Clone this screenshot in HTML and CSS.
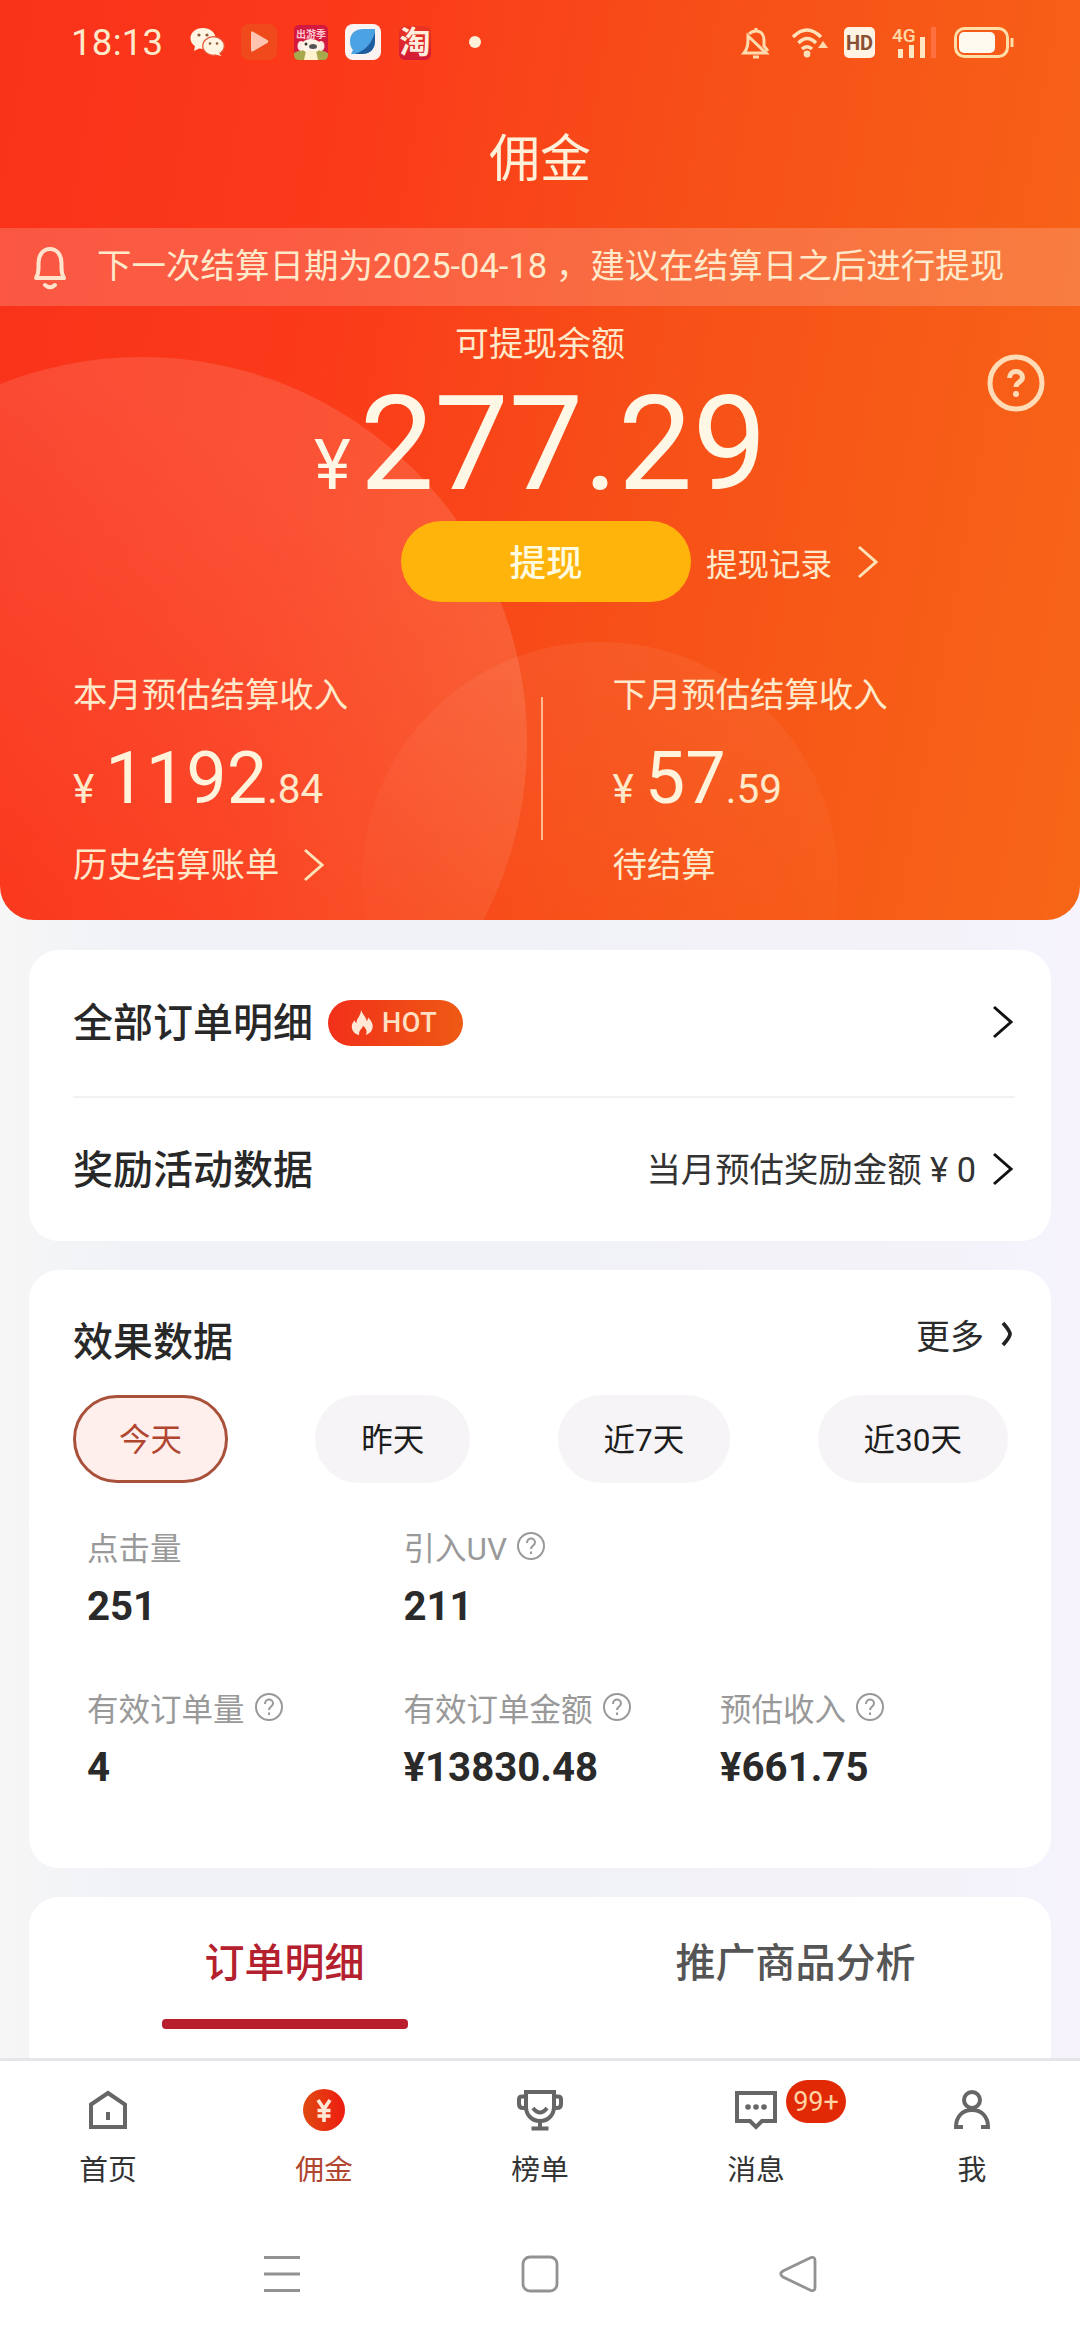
FILE: index.html
```
<!DOCTYPE html>
<html lang="zh-CN">
<head>
<meta charset="utf-8">
<title>佣金</title>
<link rel="stylesheet" href="styles.css">
</head>
<body>
<div class="screen">
  <header class="hero">
    <svg class="hero-circles" width="1080" height="920" viewBox="0 0 1080 920">
      <defs>
        <linearGradient id="c1" gradientUnits="userSpaceOnUse" x1="60" y1="930" x2="330" y2="520"><stop offset="0" stop-color="#fff" stop-opacity=".02"/><stop offset="1" stop-color="#fff" stop-opacity=".12"/></linearGradient>
        <linearGradient id="c2" gradientUnits="userSpaceOnUse" x1="600" y1="642" x2="600" y2="920"><stop offset="0" stop-color="#fff" stop-opacity=".06"/><stop offset="1" stop-color="#fff" stop-opacity=".01"/></linearGradient>
      </defs>
      <circle cx="142" cy="742" r="385" fill="url(#c1)"/>
      <circle cx="600" cy="880" r="238" fill="url(#c2)"/>
    </svg>

    <div class="status">
      <span class="time">18:13</span>
      <div class="apps">
        <svg width="36" height="36" viewBox="0 0 36 36"><path d="M14 4C6.500 4 1.500 8.500 1.500 14.200c0 3.300 1.700 6 4.500 8L5 27l5-2.600c1.300.3 2.600.5 4 .5C21 24.900 26.500 20 26.500 14.200S21 4 14 4z" fill="#fff5e2"/><ellipse cx="24.500" cy="22" rx="10.800" ry="9.300" fill="#fff5e2" stroke="#e8563a" stroke-width="1.200"/><path d="M29 28l3.500 4-6-1.500z" fill="#fff5e2"/><g fill="#8c5a3c"><circle cx="10" cy="11" r="1.600"/><circle cx="18" cy="11" r="1.600"/><circle cx="21" cy="19.500" r="1.300"/><circle cx="28" cy="19.500" r="1.300"/></g></svg>
        <svg width="36" height="36" viewBox="0 0 36 36"><rect width="36" height="36" rx="8" fill="#f04a1c"/><path d="M10 9c0-1.500 1-2 2.300-1.200l14 8.300c1.300.8 1.300 2 0 2.800l-14 8.300C11 28 10 27.500 10 26z" fill="#ffc4b0"/></svg>
        <svg width="36" height="36" viewBox="0 0 36 36"><rect x="1" y="1" width="34" height="35" rx="5" fill="#d3193f"/><path d="M1 29q8-4 17-4t17 4v2q0 5-5 5H6q-5 0-5-5z" fill="#a6a94c"/><ellipse cx="8" cy="22" rx="3.500" ry="5" fill="#ffe9e2"/><ellipse cx="28" cy="22" rx="3.500" ry="5" fill="#ffe9e2"/><ellipse cx="18" cy="22" rx="10" ry="7" fill="#fff2e6"/><path d="M13 27h10l2 9H11z" fill="#fff3cf"/><circle cx="13" cy="20" r="1.500" fill="#333"/><ellipse cx="20" cy="22.500" rx="4" ry="2.500" fill="#555"/><text x="18" y="14" text-anchor="middle" class="app-tiny">出游季</text></svg>
        <svg width="36" height="36" viewBox="0 0 36 36"><rect width="36" height="36" rx="8" fill="#fbf3f2"/><path d="M5 17C5 9 11 5 18 5h12v12c0 9-6 13-13 13H6l2-4c-2-2-3-5-3-9z" fill="#4ba3e4"/><path d="M30 8v9c0 9-6 13-13 13h-7C22 26 27 18 30 8z" fill="#1f5c9d"/></svg>
        <svg width="36" height="36" viewBox="0 0 36 36"><defs><linearGradient id="tao" x1="0" y1="0" x2="0" y2="1"><stop offset="0" stop-color="#ea3522"/><stop offset="1" stop-color="#d21a38"/></linearGradient></defs><rect x="2" y="2" width="32" height="34" rx="6" fill="url(#tao)"/><text x="18" y="29" text-anchor="middle" class="app-tao">淘</text></svg>
        <i class="dot"></i>
      </div>
      <div class="indicators">
        <svg width="30" height="36" viewBox="0 0 30 36" fill="none" stroke="#ffdcae" stroke-width="3"><path d="M15 4v3M8 10c2-2 4-3 7-3 6 0 8 5 8 9v6l4 5"/><path d="M7 12l18 17H3c4-5 4-9 4-17z"/><path d="M12 33h6"/></svg>
        <svg width="36" height="36" viewBox="0 0 36 36" fill="none" stroke="#ffe2ba" stroke-width="3.500"><path d="M1 13Q15-1 29 13" /><path d="M6.500 19Q15 10 24 19"/><circle cx="15" cy="30" r="3.400" fill="#ffe2ba" stroke="none"/><path d="M10 25q5-4.500 10 0"/><path d="M26 24l5-7 5 7z" fill="#ffdcae" stroke="none"/></svg>
        <span class="hd">HD</span>
        <svg width="48" height="36" viewBox="0 0 48 36"><text x="1" y="18" class="net">4G</text><g fill="#ffe6c2"><rect x="7" y="25" width="5" height="9"/><rect x="18" y="21" width="5" height="13"/><rect x="29" y="13" width="5" height="21"/></g><rect x="40" y="3" width="5" height="31" fill="#ff7040"/></svg>
        <svg width="62" height="36" viewBox="0 0 62 36"><rect x="2.500" y="4.500" width="52" height="28" rx="9" fill="none" stroke="#ffdfa8" stroke-width="3"/><rect x="6" y="8" width="36" height="21" rx="5" fill="#fffaf0"/><path d="M59 14v9" stroke="#ffdfa8" stroke-width="3"/></svg>
      </div>
    </div>

    <h1 class="title">佣金</h1>

    <div class="notice">
      <svg width="38" height="48" viewBox="0 0 38 48" fill="none" stroke="#ffe3cd" stroke-width="4"><path d="M5 35c2-3 2.500-6 2.500-10v-5C7.500 12 12 6 19 6s11.500 6 11.500 14v5c0 4 .5 7 2.500 10z" stroke-linejoin="round"/><path d="M14 42q5 4.500 10 0" stroke-linecap="round"/></svg>
      <span>下一次结算日期为2025-04-18 ，建议在结算日之后进行提现</span>
    </div>

    <div class="balance">
      <div class="balance-label">可提现余额</div>
      <div class="amount"><span class="yen">¥</span>277.29</div>
      <svg class="help" width="60" height="60" viewBox="0 0 60 60" fill="none" stroke="#ffdcb6" stroke-width="5"><circle cx="30" cy="30" r="26"/><path d="M23.500 25c0-4 3-6.500 6.500-6.500s6.500 2.500 6.500 6c0 4.500-6.500 4.500-6.500 9.500"/><circle cx="30" cy="41" r="3" fill="#ffdcb6" stroke="none"/></svg>
      <div class="actions">
        <button class="withdraw">提现</button>
        <span class="records">提现记录</span>
        <svg width="24" height="36" viewBox="0 0 24 36" class="chev"><path d="M3 3l17 15L3 33"/></svg>
      </div>
    </div>

    <div class="income">
      <section class="income-col">
        <div class="income-label">本月预估结算收入</div>
        <div class="income-num"><span>¥</span><b>1192</b><span>.84</span></div>
        <div class="income-foot">历史结算账单<svg width="24" height="36" viewBox="0 0 24 36" class="chev"><path d="M3 3l17 15L3 33"/></svg></div>
      </section>
      <i class="income-line"></i>
      <section class="income-col">
        <div class="income-label">下月预估结算收入</div>
        <div class="income-num"><span>¥</span><b>57</b><span>.59</span></div>
        <div class="income-foot">待结算</div>
      </section>
    </div>
  </header>

  <main class="cards">
    <section class="card links">
      <div class="row">
        <h2>全部订单明细</h2>
        <span class="hot"><svg width="26" height="30" viewBox="0 0 26 30"><path d="M12 1c2 6 6 8 6 12 1-1 1.500-2 1.500-4C24 13 25 17 24.500 20c-.6 4-3.500 7-7.500 8 2-3 1-7-3-10-1 4-5 5-4 10-5-1-8.500-5-8-10 .3-3 1.500-4 3-6 .5 2 1 3 2 3C7 10 12 7 12 1z" fill="#ffe9d6"/></svg>HOT</span>
        <svg width="24" height="36" viewBox="0 0 24 36" class="chev dark"><path d="M3 3l17 15L3 33"/></svg>
      </div>
      <div class="row">
        <h2>奖励活动数据</h2>
        <span class="reward">当月预估奖励金额 ¥ 0</span>
        <svg width="24" height="36" viewBox="0 0 24 36" class="chev dark"><path d="M3 3l17 15L3 33"/></svg>
      </div>
    </section>

    <section class="card effect">
      <div class="effect-head">
        <h2>效果数据</h2>
        <span class="more">更多<svg width="14" height="26" viewBox="0 0 14 26" fill="none" stroke="#222" stroke-width="3.800"><path d="M3 2q7 8 7 11t-7 11"/></svg></span>
      </div>
      <div class="pills">
        <span class="pill active">今天</span><span class="pill">昨天</span><span class="pill">近7天</span><span class="pill">近30天</span>
      </div>
      <div class="stats">
        <div class="stat"><p>点击量</p><strong>251</strong></div>
        <div class="stat wide"><p>引入UV<svg class="q" viewBox="0 0 30 30"><circle cx="15" cy="15" r="13"/><path d="M11 12c0-3 2-4.500 4-4.500s4 1.500 4 4c0 3-4 3-4 6.500M15 20.500v2.500"/></svg></p><strong>211</strong></div>
        <div class="stat"><p>有效订单量<svg class="q" viewBox="0 0 30 30"><circle cx="15" cy="15" r="13"/><path d="M11 12c0-3 2-4.500 4-4.500s4 1.500 4 4c0 3-4 3-4 6.500M15 20.500v2.500"/></svg></p><strong>4</strong></div>
        <div class="stat"><p>有效订单金额<svg class="q" viewBox="0 0 30 30"><circle cx="15" cy="15" r="13"/><path d="M11 12c0-3 2-4.500 4-4.500s4 1.500 4 4c0 3-4 3-4 6.500M15 20.500v2.500"/></svg></p><strong>¥13830.48</strong></div>
        <div class="stat"><p>预估收入<svg class="q" viewBox="0 0 30 30"><circle cx="15" cy="15" r="13"/><path d="M11 12c0-3 2-4.500 4-4.500s4 1.500 4 4c0 3-4 3-4 6.500M15 20.500v2.500"/></svg></p><strong>¥661.75</strong></div>
      </div>
    </section>

    <section class="card tabs">
      <div class="tab current">订单明细</div>
      <div class="tab">推广商品分析</div>
    </section>
  </main>

  <nav class="tabbar">
    <a class="item"><svg class="ico" viewBox="0 0 48 48"><path d="M7 18.500L24 7l17 11.500V41H7z"/><path d="M24 26v8"/></svg>首页</a>
    <a class="item on"><svg class="ico" viewBox="0 0 48 48"><defs><linearGradient id="coin"><stop offset="0" stop-color="#e04a12"/><stop offset="1" stop-color="#ee1c10"/></linearGradient></defs><circle cx="24" cy="24" r="21" fill="url(#coin)" stroke="none"/><path d="M18 14l6 9 6-9M24 23v13M17.500 24.500h13M17.500 30h13" stroke="#ffe9d6" stroke-width="3.600"/></svg>佣金</a>
    <a class="item"><svg class="ico" viewBox="0 0 48 48"><path d="M10 6h28v15c0 8-6 14-14 14S10 29 10 21z"/><path d="M10 10.500H6q-3 0-3 3V18q0 4 4 4h3M38 10.500h4q3 0 3 3V18q0 4-4 4h-3M17 22q7 9 14 0M24 35v7M15.500 42.500h17"/></svg>榜单</a>
    <a class="item"><span class="msg"><svg class="ico" viewBox="0 0 48 48"><path d="M5 7h38v28H30l-6 6-6-6H5z"/><g fill="#666" stroke="none"><circle cx="16" cy="21" r="2.800"/><circle cx="24" cy="21" r="2.800"/><circle cx="32" cy="21" r="2.800"/></g></svg><em class="badge">99+</em></span>消息</a>
    <a class="item"><svg class="ico" viewBox="0 0 48 48"><circle cx="24" cy="14" r="8"/><path d="M15 41H8c0-10 6-17 16-17s16 7 16 17h-7"/></svg>我</a>
  </nav>

  <footer class="sysnav">
    <svg width="40" height="40" viewBox="0 0 40 40"><path d="M2 3.500h36M2 20h36M2 36.500h36"/></svg>
    <svg width="40" height="40" viewBox="0 0 40 40"><rect x="3" y="3" width="34" height="34" rx="7"/></svg>
    <svg width="40" height="40" viewBox="0 0 40 40"><path d="M33 3.500L5 17q-4.500 3 0 6l28 13.500q4 1 4-3v-27q0-4-4-3z"/></svg>
  </footer>
</div>
</body>
</html>
```
FILE: styles.css
```
* { box-sizing: border-box; margin: 0; padding: 0; }

body {
  width: 1080px;
  font-family: Roboto, "Noto Sans CJK SC", sans-serif;
  background: #fff;
  color: #2b2b2b;
}

svg { display: block; flex: none; }

.screen {
  display: flex;
  flex-direction: column;
  width: 1080px;
  height: 2340px;
  overflow: hidden;
  background: linear-gradient(90deg, #f6f6f6, #f0f2f7 12%, #f2f2f8 85%, #f6f3fd);
}

/* Red header */
.hero {
  position: relative;
  flex: none;
  height: 920px;
  overflow: hidden;
  border-radius: 0 0 34px 34px;
  background: linear-gradient(100deg, #f9321a 0%, #fb3a1a 30%, #f74f18 58%, #f76617 100%);
  color: #ffe9cb;
}
.hero-circles { position: absolute; left: 0; top: 0; }
.hero > div, .title { position: relative; }

.status {
  display: flex;
  align-items: center;
  height: 84px;
  padding-left: 71px;
}
.time { width: 118px; font-size: 36.500px; letter-spacing: .3px; }
.apps { display: flex; align-items: center; gap: 16px; }
.app-tiny { font-size: 10px; font-weight: 700; fill: #ffc7d0; }
.app-tao { font-size: 31px; font-weight: 700; fill: #ffeede; }
.dot { width: 12px; height: 12px; margin-left: 20px; border-radius: 50%; background: #fff0d9; }
.indicators { display: flex; align-items: center; margin-left: 260px; }
.indicators svg:nth-child(2) { margin: 0 16px 0 21px; }
.hd {
  width: 31px;
  height: 31px;
  margin-right: 16px;
  border-radius: 5px;
  background: #fff3e4;
  color: #8a5033;
  font-size: 20px;
  font-weight: 700;
  line-height: 32px;
  text-align: center;
}
.net { font-size: 19px; font-weight: 500; fill: #ffd9a8; }
.indicators svg:last-child { margin-left: 14px; }

.title {
  height: 144px;
  padding-top: 40px;
  font-size: 51px;
  font-weight: 400;
  line-height: 72px;
  text-align: center;
  color: #fff0da;
}

.notice {
  display: flex;
  align-items: center;
  gap: 28px;
  height: 78px;
  padding-left: 31px;
  background: rgba(255, 255, 255, .18);
  font-size: 34.500px;
  white-space: nowrap;
}
.notice span { margin-bottom: 8px; }

.balance { height: 344px; padding-top: 17px; }
.balance-label { font-size: 34px; line-height: 42px; text-align: center; }
.amount {
  height: 148px;
  padding: 10px 0 0 314px;
  font-size: 132.500px;
  line-height: 138px;
  white-space: nowrap;
  color: #fff7e6;
}
.yen { margin-right: 9px; font-size: 70px; }
.help { position: absolute; left: 986px; top: 47px; }
.actions { display: flex; align-items: center; margin: 8px 0 0 401px; }
.withdraw {
  width: 290px;
  height: 81px;
  padding-bottom: 3px;
  border: 0;
  border-radius: 41px;
  background: #ffb40c;
  color: #fffbe0;
  font: 500 36.500px Roboto, "Noto Sans CJK SC", sans-serif;
}
.records { margin: 0 24px 0 15px; font-size: 31.500px; }

.chev { fill: none; stroke: #ffe3b8; stroke-width: 3; }
.chev.dark { stroke: #111; }

.income { display: flex; padding: 24px 0 0 73px; }
.income-col { width: 468px; }
.income-line { width: 2px; height: 143px; margin: 23px 70px 0 0; background: #ffb98e; }
.income-label { font-size: 34.400px; line-height: 42px; }
.income-num {
  display: flex;
  align-items: baseline;
  height: 86px;
  margin-top: 20px;
  font-size: 40.500px;
  line-height: 86px;
}
.income-num b { margin: 0 0 0 11px; font-size: 72px; font-weight: 400; color: #fff3dc; }
.income-foot {
  display: flex;
  align-items: center;
  gap: 23px;
  margin-top: 22px;
  font-size: 34.400px;
  line-height: 42px;
}

/* Cards */
.cards {
  display: flex;
  flex: none;
  flex-direction: column;
  gap: 29px;
  height: 1138px;
  padding: 30px 29px 0;
  overflow: hidden;
}
.card { flex: none; border-radius: 30px; background: #fff; }
.card h2 { font-size: 40px; font-weight: 500; color: #282828; }

.links { height: 291px; padding: 0 36px 0 44px; }
.row { display: flex; align-items: center; height: 146px; }
.row + .row { border-top: 2px solid #f2f2f2; }
.row h2, .row .reward { margin-bottom: 7px; }
.row .chev { margin-left: auto; margin-bottom: 3px; }
.row .reward + .chev { margin-left: 15px; }
.hot {
  display: flex;
  align-items: center;
  gap: 8px;
  width: 135px;
  height: 46px;
  margin-left: 15px;
  padding-left: 22px;
  border-radius: 23px;
  background: linear-gradient(90deg, #f2301a, #ee5a14);
  color: #ffe0c4;
  font-size: 27px;
  font-weight: 500;
  letter-spacing: .6px;
}
.hot svg { width: 24px; height: 28px; }
.reward { margin-left: auto; font-size: 34.400px; color: #333; }

.effect { height: 598px; padding: 40px 37px 0 44px; }
.effect-head { display: flex; align-items: center; justify-content: space-between; height: 58px; }
.more { display: flex; align-items: center; gap: 16px; margin-top: -10px; font-size: 34px; }
.pills { display: flex; justify-content: space-between; margin: 27px 6px 0 0; }
.pill {
  height: 88px;
  padding: 0 46px;
  border-radius: 44px;
  background: #f7f4f7;
  color: #1d1d1d;
  font-size: 31.500px;
  line-height: 91px;
}
.pill.active {
  padding: 0 43px;
  border: 3px solid #a8503a;
  background: #ffefec;
  color: #b0462f;
  line-height: 85px;
}
.stats { display: grid; grid-template-columns: 316.500px 316.500px auto; row-gap: 61px; padding: 41px 0 0 14px; }
.stat.wide { grid-column: 2 / 4; }
.stat p { display: flex; align-items: center; gap: 9px; height: 44px; font-size: 31.500px; color: #999; }
.stat strong { display: block; height: 56px; font-size: 40.200px; line-height: 77px; color: #2a2a2a; }
.q { width: 30px; height: 30px; fill: none; stroke: #999; stroke-width: 2; }

.tabs { display: flex; height: 190px; }
.tab {
  flex: 1;
  padding-top: 38px;
  font-size: 40px;
  font-weight: 500;
  line-height: 58px;
  text-align: center;
  color: #555;
}
.tab.current { color: #b5202e; }
.tab.current::after {
  content: "";
  display: block;
  width: 246px;
  height: 10px;
  margin: 26px auto 0;
  border-radius: 4px;
  background: #b81e2c;
}

/* Bottom navigation */
.tabbar {
  display: flex;
  flex: none;
  height: 148px;
  padding-top: 27px;
  border-top: 3px solid #e6e6ea;
  background: #fff;
}
.item {
  display: flex;
  flex: 1;
  flex-direction: column;
  align-items: center;
  gap: 15px;
  font-size: 28.800px;
  line-height: 42px;
  color: #333;
}
.item.on { color: #b0462f; }
.ico { width: 48px; height: 48px; margin-top: -2px; fill: none; stroke: #666; stroke-width: 4; }
.msg { position: relative; }
.badge {
  position: absolute;
  left: 54px;
  top: -8px;
  width: 60px;
  height: 43px;
  border-radius: 22px;
  background: #e12a05;
  color: #ffd3a4;
  font-size: 27px;
  font-style: normal;
  line-height: 44px;
  text-align: center;
}

.sysnav {
  display: flex;
  flex: 1;
  gap: 218px;
  padding: 48px 0 0 262px;
  background: #fff;
}
.sysnav svg { fill: none; stroke: #929292; stroke-width: 2.800; }
```
